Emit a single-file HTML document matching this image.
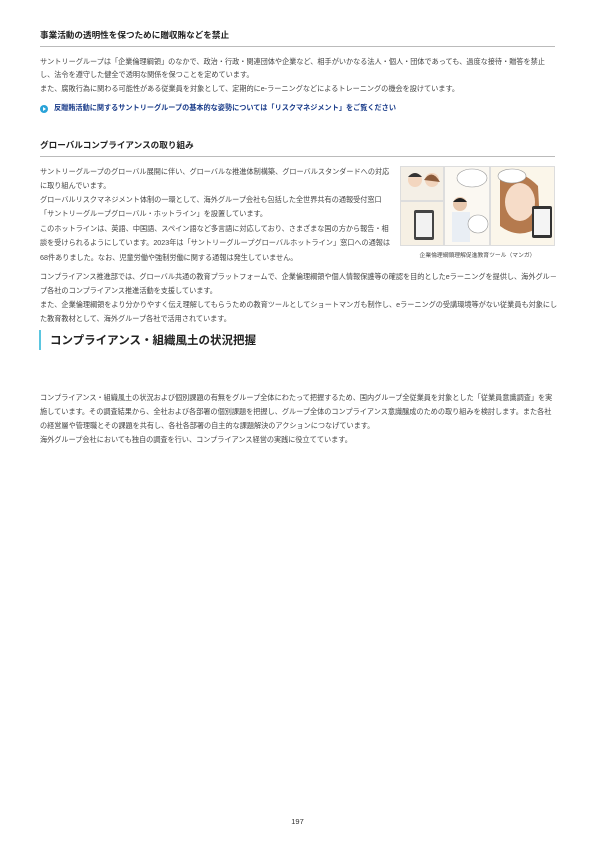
<!DOCTYPE html>
<html><head><meta charset="utf-8"><style>
body{margin:0;background:#fff;width:595px;height:842px;position:relative;font-family:"Liberation Sans","Noto Sans CJK JP",sans-serif;color:#333;}
.a{position:absolute;white-space:nowrap;}
.h{font-size:8.6px;font-weight:bold;color:#222;}
.t{font-size:7.15px;color:#444;}
.rule{position:absolute;left:40px;width:515px;height:1px;background:#bbb;}
</style></head><body>
<div class="a h" style="left:40px;top:29px">事業活動の透明性を保つために贈収賄などを禁止</div>
<div class="rule" style="top:46px"></div>
<div class="a t" style="left:40px;top:57px">サントリーグループは「企業倫理綱領」のなかで、政治・行政・関連団体や企業など、相手がいかなる法人・個人・団体であっても、過度な接待・贈答を禁止</div>
<div class="a t" style="left:40px;top:70px">し、法令を遵守した健全で透明な関係を保つことを定めています。</div>
<div class="a t" style="left:40px;top:84px">また、腐敗行為に関わる可能性がある従業員を対象として、定期的にe-ラーニングなどによるトレーニングの機会を設けています。</div>
<div class="a" style="left:40px;top:105px;width:8px;height:8px;border-radius:50%;background:#2aa3d8"></div>
<div class="a" style="left:43px;top:107px;width:0;height:0;border-left:3px solid #fff;border-top:2px solid transparent;border-bottom:2px solid transparent"></div>
<div class="a t" style="left:54px;top:103px;color:#1a3c8a;font-weight:bold">反贈賄活動に関するサントリーグループの基本的な姿勢については「リスクマネジメント」をご覧ください</div>

<div class="a h" style="left:40px;top:139px">グローバルコンプライアンスの取り組み</div>
<div class="rule" style="top:156px"></div>
<div class="a t" style="left:40px;top:167px">サントリーグループのグローバル展開に伴い、グローバルな推進体制構築、グローバルスタンダードへの対応</div>
<div class="a t" style="left:40px;top:181px">に取り組んでいます。</div>
<div class="a t" style="left:40px;top:195px">グローバルリスクマネジメント体制の一環として、海外グループ会社も包括した全世界共有の通報受付窓口</div>
<div class="a t" style="left:40px;top:209px">「サントリーグループグローバル・ホットライン」を設置しています。</div>
<div class="a t" style="left:40px;top:224px">このホットラインは、英語、中国語、スペイン語など多言語に対応しており、さまざまな国の方から報告・相</div>
<div class="a t" style="left:40px;top:238px">談を受けられるようにしています。2023年は「サントリーグループグローバルホットライン」窓口への通報は</div>
<div class="a t" style="left:40px;top:253px">68件ありました。なお、児童労働や強制労働に関する通報は発生していません。</div>

<svg class="a" style="left:400px;top:166px" width="155" height="80" viewBox="0 0 155 80">
<rect width="155" height="80" fill="#ddd"/>
<rect x="1" y="1" width="42" height="33" fill="#f4efe6"/>
<rect x="1" y="36" width="42" height="43" fill="#f6f0e4"/>
<rect x="45" y="1" width="44" height="78" fill="#fbf8f2"/>
<rect x="91" y="1" width="63" height="78" fill="#fbf6ea"/>
<circle cx="15" cy="14" r="7" fill="#f3d6bf"/><path d="M8 11 Q15 3 22 11" fill="#333"/>
<circle cx="32" cy="14" r="7" fill="#f1d4bd"/><path d="M24 14 Q32 2 40 16" fill="#8a5a3a"/>
<rect x="14" y="44" width="20" height="30" rx="2" fill="#444"/><rect x="16" y="47" width="16" height="24" fill="#f2f2f2"/>
<ellipse cx="72" cy="12" rx="15" ry="9" fill="#fff" stroke="#999" stroke-width=".6"/>
<circle cx="60" cy="38" r="7" fill="#e8c8ae"/><path d="M53 36 Q60 28 67 36" fill="#222"/>
<rect x="52" y="46" width="18" height="30" fill="#e9eef4"/>
<ellipse cx="78" cy="58" rx="10" ry="9" fill="#fff" stroke="#999" stroke-width=".6"/>
<path d="M100 10 Q118 0 138 20 L140 60 Q120 75 100 60 Z" fill="#b57a4e"/>
<ellipse cx="120" cy="36" rx="15" ry="19" fill="#f6dcc8"/>
<ellipse cx="112" cy="10" rx="14" ry="7" fill="#fff" stroke="#999" stroke-width=".6"/>
<rect x="132" y="40" width="20" height="32" rx="2" fill="#333"/><rect x="134" y="43" width="16" height="26" fill="#f4f4f4"/>
</svg>
<div class="a" style="left:400px;top:250px;width:155px;text-align:center;font-size:5.8px;color:#444">企業倫理綱領理解促進教育ツール（マンガ）</div>

<div class="a t" style="left:40px;top:272px">コンプライアンス推進部では、グローバル共通の教育プラットフォームで、企業倫理綱領や個人情報保護等の確認を目的としたeラーニングを提供し、海外グル－</div>
<div class="a t" style="left:40px;top:286px">プ各社のコンプライアンス推進活動を支援しています。</div>
<div class="a t" style="left:40px;top:300px">また、企業倫理綱領をより分かりやすく伝え理解してもらうための教育ツールとしてショートマンガも制作し、eラーニングの受講環境等がない従業員も対象にし</div>
<div class="a t" style="left:40px;top:314px">た教育教材として、海外グループ各社で活用されています。</div>

<div class="a" style="left:39px;top:330px;width:2px;height:20px;background:#5bc6e0"></div>
<div class="a" style="left:50px;top:332px;font-size:11.5px;font-weight:bold;color:#222">コンプライアンス・組織風土の状況把握</div>

<div class="a t" style="left:40px;top:393px">コンプライアンス・組織風土の状況および個別課題の有無をグループ全体にわたって把握するため、国内グループ全従業員を対象とした「従業員意識調査」を実</div>
<div class="a t" style="left:40px;top:407px">施しています。その調査結果から、全社および各部署の個別課題を把握し、グループ全体のコンプライアンス意識醸成のための取り組みを検討します。また各社</div>
<div class="a t" style="left:40px;top:421px">の経営層や管理職とその課題を共有し、各社各部署の自主的な課題解決のアクションにつなげています。</div>
<div class="a t" style="left:40px;top:435px">海外グループ会社においても独自の調査を行い、コンプライアンス経営の実践に役立てています。</div>

<div class="a" style="left:0;width:595px;top:817px;text-align:center;font-size:7.5px;color:#333">197</div>
</body></html>
